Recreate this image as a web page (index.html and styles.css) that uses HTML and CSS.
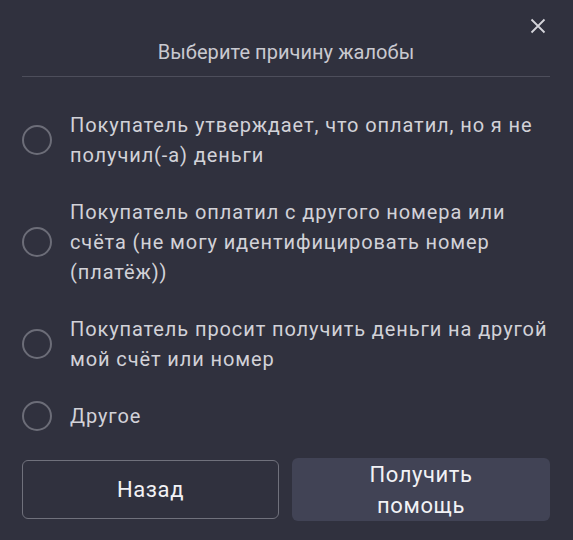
FILE: index.html
```html
<!DOCTYPE html>
<html lang="ru">
<head>
<meta charset="utf-8">
<link rel="stylesheet" href="styles.css">
</head>
<body>
<div class="modal">
  <button class="close" aria-label="Закрыть">
    <svg width="16" height="16" viewBox="0 0 16 16"><path d="M1.5 1.5L14.5 14.5M14.5 1.5L1.5 14.5" stroke="#d4d4da" stroke-width="1.8"/></svg>
  </button>
  <div class="header">
    <h1 class="title">Выберите причину жалобы</h1>
  </div>
  <div class="options">
    <label class="option"><span class="radio"></span><span class="text">Покупатель утверждает, что оплатил, но я не получил(-а) деньги</span></label>
    <label class="option"><span class="radio"></span><span class="text">Покупатель оплатил с другого номера или счёта (не могу идентифицировать номер (платёж))</span></label>
    <label class="option"><span class="radio"></span><span class="text">Покупатель просит получить деньги на другой мой счёт или номер</span></label>
    <label class="option"><span class="radio"></span><span class="text">Другое</span></label>
  </div>
  <div class="actions">
    <button class="btn btn-outline">Назад</button>
    <button class="btn btn-fill">Получить помощь</button>
  </div>
</div>
</body>
</html>
```
FILE: styles.css
```css
* { box-sizing: border-box; }
html, body { margin: 0; padding: 0; }
body {
  background: #30313e;
  width: 573px;
  height: 540px;
  font-family: Roboto, "Noto Sans", sans-serif;
  color: #d2d2d8;
  overflow: hidden;
}
.modal {
  position: relative;
  padding: 0 23px 0 22px;
}
.close {
  position: absolute;
  top: 18px;
  right: 27px;
  width: 16px;
  height: 16px;
  padding: 0;
  border: none;
  background: none;
  display: flex;
}
.header {
  padding-top: 38px;
  border-bottom: 1px solid #4d4e5b;
  height: 77px;
}
.title {
  margin: 0;
  text-align: center;
  font-size: 20px;
  font-weight: 400;
  line-height: 28px;
  color: #c9c9d0;
  letter-spacing: 0.05px;
}
.options {
  display: flex;
  flex-direction: column;
  gap: 27px;
  padding-top: 33px;
}
.option {
  display: flex;
  align-items: center;
  gap: 18px;
}
.radio {
  flex: none;
  width: 30px;
  height: 30px;
  border: 2.5px solid #6c6d78;
  border-radius: 50%;
}
.text {
  font-size: 20px;
  line-height: 30px;
  letter-spacing: 0.9px;
  color: #d2d2d8;
}
.actions {
  display: grid;
  grid-template-columns: 257px 258px;
  gap: 13px;
  margin-top: 27px;
}
.btn {
  height: 63px;
  border-radius: 6px;
  font-family: Roboto, "Noto Sans", sans-serif;
  font-size: 22px;
  line-height: 31px;
  letter-spacing: 0.6px;
  color: #f2f2f5;
  padding: 0 50px;
}
.btn-outline {
  background: transparent;
  border: 1.5px solid #70717c;
  margin: 2px 0;
  height: 59px;
}
.btn-fill {
  background: #414355;
  border: none;
}
```
